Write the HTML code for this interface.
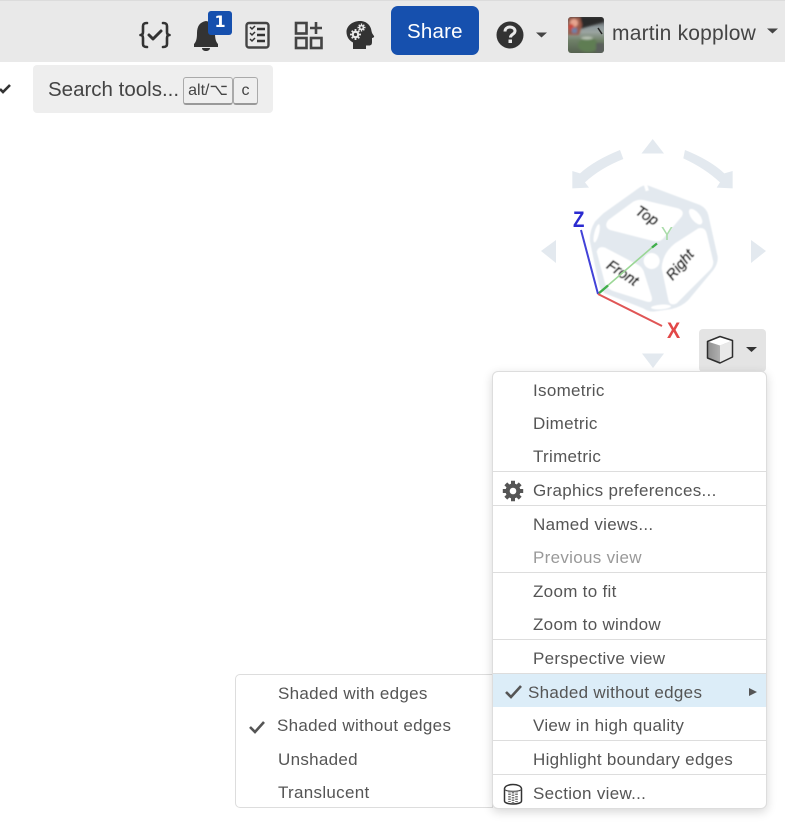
<!DOCTYPE html>
<html><head><meta charset="utf-8">
<style>
html,body{margin:0;padding:0;background:#fff}
body{width:785px;height:834px;position:relative;overflow:hidden;font-family:"Liberation Sans",sans-serif;color:#555}
.a{position:absolute}
.t{position:absolute;white-space:nowrap;font-size:17px;line-height:20px;color:#555;letter-spacing:.3px}
.h{position:absolute;height:1px;background:#ddd;left:493px;width:273px}
</style></head><body>
<!-- Top bar -->
<div class="a" style="left:0;top:0;width:785px;height:62px;background:#e9e9e9;border-top:1px solid #dcdcdc;box-sizing:border-box"></div>
<svg class="a" style="left:0;top:0" width="785" height="62" viewBox="0 0 785 62" fill="none">
<defs>
<linearGradient id="av" x1="0" y1="0" x2="0" y2="1"><stop offset="0" stop-color="#3c3c3e"/><stop offset=".28" stop-color="#8f999c"/><stop offset=".42" stop-color="#9aa39f"/><stop offset=".65" stop-color="#6f8068"/><stop offset="1" stop-color="#55614f"/></linearGradient>
<clipPath id="avc"><rect x="568" y="17" width="36" height="36" rx="3"/></clipPath>
<filter id="b1"><feGaussianBlur stdDeviation="1"/></filter>
</defs>
<!-- braces check -->
<g stroke="#333" stroke-width="2.600" stroke-linecap="round" stroke-linejoin="round">
<path d="M147 23c-3 0-4 1-4 3v6c0 2-1 3-2.500 3 1.500 0 2.500 1 2.500 3v6c0 2 1 3 4 3"/>
<path d="M163 23c3 0 4 1 4 3v6c0 2 1 3 2.500 3-1.500 0-2.500 1-2.500 3v6c0 2-1 3-4 3"/>
<path d="M149 35l4 4 8-8" stroke-width="3"/>
</g>
<!-- bell -->
<path d="M206 21c-6 1-9 5-9 12 0 6-1 9-3 11v3h24v-3c-2-2-3-5-3-11 0-7-3-11-9-12z" fill="#333"/>
<path d="M202 48h8c0 2-2 3-4 3s-4-1-4-3z" fill="#333"/>
<rect x="208" y="11" width="24" height="24" rx="3" fill="#1650ae"/>
<!-- checklist -->
<rect x="246.500" y="23" width="22" height="24.500" rx="2.500" stroke="#444" stroke-width="2.400"/>
<g stroke="#333" stroke-width="1.500"><path d="M250 27l2 2 3-3M250 33l2 2 3-3M250 39l2 2 3-3"/></g>
<g stroke="#333" stroke-width="2.400"><path d="M257 29h8M257 35h8M257 41h8"/></g>
<!-- apps plus -->
<g stroke="#444" stroke-width="2.600">
<rect x="296" y="23" width="10.500" height="10.500"/>
<rect x="296" y="38" width="10.500" height="10"/>
<rect x="311" y="38" width="10.500" height="10"/>
<path d="M316 22v12M310 28h12"/>
</g>
<!-- head gears -->
<path d="M360 21c7 0 11 5 11.500 10 .2 2 1.500 3.500 2.500 5 .5 1-.5 1.700-2 2v4c0 2.500-1 3.500-3 3.500h-3V49h-13v-6.500c-4-2-6.500-6-6.500-10.500 0-6 6-11 13.500-11z" fill="#333"/>
<g fill="#e9e9e9"><circle cx="355.500" cy="34.500" r="3.700"/><g stroke="#e9e9e9" stroke-width="1.800"><path d="M355.500 29v11M350 34.500h11M351.700 30.700l7.600 7.600M359.300 30.700l-7.600 7.600"/></g>
<circle cx="361.500" cy="27.500" r="2.600"/><g stroke="#e9e9e9" stroke-width="1.400"><path d="M361.500 23.500v8M357.500 27.500h8M358.700 24.700l5.600 5.600M364.300 24.700l-5.600 5.600"/></g></g>
<circle cx="355.500" cy="34.500" r="1.600" fill="#333"/><circle cx="361.500" cy="27.500" r="1.100" fill="#333"/>
<!-- share btn -->
<rect x="391" y="6" width="88" height="49" rx="7" fill="#1650ae"/>
<!-- help -->
<circle cx="510" cy="35" r="13.500" fill="#333"/>
<path d="M505 31.500c0-3 2.500-4.500 5-4.500s5 1.500 5 4c0 3.500-4.500 3-4.500 6.500" stroke="#e9e9e9" stroke-width="3" fill="none"/>
<rect x="508.500" y="39.500" width="3.500" height="3.500" fill="#e9e9e9"/>
<path d="M536 32.500h11l-5.500 5z" fill="#444"/>
<path d="M767 28.500h11l-5.500 5z" fill="#444"/>
<!-- avatar -->
<g clip-path="url(#avc)"><rect x="568" y="17" width="36" height="36" fill="url(#av)"/>
<g filter="url(#b1)">
<path d="M578 17h26v5l-14 4-10 3z" fill="#2a2a2c"/>
<path d="M568 17h12l2 8-3 10h-11z" fill="#9a5a48"/>
<circle cx="574" cy="23" r="4" fill="#e6a48f"/><circle cx="571" cy="27" r="3" fill="#c9473a"/>
<rect x="572" y="28" width="5" height="5" fill="#6d82a8"/>
<ellipse cx="588" cy="45" rx="10" ry="7" fill="#5f7d52"/>
<ellipse cx="587" cy="38" rx="6" ry="1.500" fill="#bcc5b8"/>
<path d="M596 43h8v10h-8z" fill="#5a5f5c"/>
</g>
<path d="M598 28l4 6" stroke="#222" stroke-width="1.500"/></g>
</svg>
<div class="t" style="left:407px;top:20px;font-size:20.500px;color:#fff;letter-spacing:.2px;line-height:24px">Share</div>
<div class="t" style="left:214.500px;top:11px;font-size:16px;font-weight:bold;color:#fff;line-height:22px;font-family:'DejaVu Sans',sans-serif;letter-spacing:0">1</div>
<div class="t" style="left:612px;top:22px;font-size:21px;line-height:24px;color:#444;letter-spacing:.2px">martin kopplow</div>

<!-- Search row -->
<svg class="a" style="left:0;top:82px" width="12" height="14" fill="none"><path d="M0 7l3 3 7-7" stroke="#333" stroke-width="2.600"/></svg>
<div class="a" style="left:33px;top:65px;width:240px;height:48px;background:#eee;border-radius:4px"></div>
<div class="t" style="left:48px;top:78px;font-size:20.500px;line-height:24px;color:#444;letter-spacing:0">Search tools...</div>
<div class="a" style="left:183px;top:77px;width:50px;height:28px;box-sizing:border-box;background:#efefef;border:1px solid #aaa;border-bottom:2px solid #999;border-radius:3px;font-size:16px;line-height:26px;text-align:center;color:#444;white-space:nowrap">alt/⌥</div>
<div class="a" style="left:233px;top:77px;width:25px;height:28px;box-sizing:border-box;background:#efefef;border:1px solid #aaa;border-bottom:2px solid #999;border-radius:3px;font-size:16px;line-height:26px;text-align:center;color:#444">c</div>

<!-- View cube -->
<svg class="a" style="left:530px;top:130px" width="250" height="250" viewBox="0 0 250 250" fill="none" font-family="'Liberation Sans',sans-serif">
<defs><filter id="b2" x="-10%" y="-10%" width="120%" height="120%"><feGaussianBlur stdDeviation="1.800"/></filter></defs>
<g fill="#e3e9ef">
<path d="M122.700 9l11.300 14.500h-22.500z"/>
<path d="M123 238l-11-14.500h22z"/>
<path d="M11 121l15-11v23z"/>
<path d="M236 121l-15-11v23z"/>
<path transform="translate(35 5) scale(.3333)" d="M165 45Q90 75 45 115L22 108V160L72 158L60 142Q105 100 175 72Z"/>
<path transform="translate(35 5) scale(.3333)" d="M360 45Q435 75 478 115L503 108V160L455 158L465 142Q420 100 355 70Z"/>
</g>
<g transform="translate(45 45) scale(.3333)" filter="url(#b2)">
<path fill="#e3e9ef" d="M215 30L375 90Q395 100 400 120L428 245Q430 265 415 285L340 375Q320 395 290 402L235 410Q220 410 205 400L90 355Q75 345 72 330L45 200Q42 170 60 140L85 115L190 40Q205 30 215 30Z"/>
<g fill="#fff">
<path d="M100 135L175 80Q190 72 205 75L310 100Q330 108 320 125L265 190Q255 202 235 198L105 165Q85 155 100 135Z"/>
<path d="M260 280Q262 235 300 205L370 160Q390 155 395 175L415 260Q415 275 405 285L305 385Q285 395 280 375Z"/>
<path d="M65 230Q70 212 90 218L190 270Q205 280 208 295L230 365Q235 385 215 380L120 350Q100 345 90 325Z"/>
<circle cx="230" cy="258" r="24"/>
<ellipse cx="362" cy="125" rx="13" ry="28" transform="rotate(-38 362 125)"/>
<ellipse cx="65" cy="175" rx="7" ry="28" transform="rotate(14 65 175)"/>
<ellipse cx="258" cy="396" rx="30" ry="7" transform="rotate(-4 258 396)"/>
<rect x="208" y="20" width="10" height="28" transform="rotate(-16 213 34)"/>
</g>
<g fill="#222" stroke="#222" stroke-width="1.500" font-style="italic" font-size="44">
<text transform="translate(178 115) rotate(32)">Top</text>
<text transform="translate(92 278) rotate(33)">Front</text>
<text transform="translate(293 318) rotate(-50)">Right</text>
</g>
</g>
<path d="M68 164l58-50" stroke="#9bd796" stroke-width="1.600"/>
<path d="M68 164l10-8.500" stroke="#3fae4a" stroke-width="2.400"/>
<path d="M122 117.500l5-4" stroke="#3fae4a" stroke-width="2.400"/>
<path d="M51 100l17 64" stroke="#4242d8" stroke-width="2"/>
<path d="M68 164l64 32" stroke="#e05555" stroke-width="2"/>
<text transform="translate(43 97) scale(.85 1)" font-size="22" font-weight="bold" fill="#2a2ad0">Z</text>
<text transform="translate(137 208) scale(.9 1)" font-size="22" font-weight="bold" fill="#e24848">X</text>
<text x="131" y="110" font-size="18" fill="#a9dca9">Y</text>
</svg>

<!-- cube button -->
<div class="a" style="left:699px;top:329px;width:67px;height:43px;background:#e4e4e4;border-radius:4px"></div>
<svg class="a" style="left:699px;top:329px" width="67" height="43" fill="none">
<defs><linearGradient id="cl" x1="0" x2="1"><stop offset="0" stop-color="#8f8f8f"/><stop offset="1" stop-color="#d0d0d0"/></linearGradient></defs>
<path d="M8.500 12.500L21 7.500l12.500 4v16.500L21 34 8.500 29z" fill="url(#cl)"/>
<path d="M8.500 12.500L21 7.500l12.500 4L21 16.500z" fill="#fff"/>
<path d="M21 16.500l12.500-5v16.500L21 34z" fill="#e8e8e8"/>
<path d="M8.500 12.500L21 7.500l12.500 4v16.500L21 34 8.500 29z" stroke="#2e2e2e" stroke-width="1.500" stroke-linejoin="round"/>
<path d="M47 18h11l-5.500 5z" fill="#333"/>
</svg>

<!-- Submenu -->
<div class="a" style="left:235px;top:674px;width:258px;height:134px;box-sizing:border-box;background:#fff;border:1px solid #ddd;border-radius:5px 0 0 5px"></div>
<div class="t" style="left:278px;top:684px">Shaded with edges</div>
<div class="t" style="left:277px;top:716px">Shaded without edges</div>
<div class="t" style="left:278px;top:750px">Unshaded</div>
<div class="t" style="left:278px;top:783px">Translucent</div>
<svg class="a" style="left:248px;top:719px" width="18" height="16" fill="none"><path d="M2 8l5 5L16 3" stroke="#555" stroke-width="2.600"/></svg>

<!-- Main menu -->
<div class="a" style="left:492px;top:371px;width:275px;height:438px;box-sizing:border-box;background:#fff;border:1px solid #ddd;border-radius:6px;box-shadow:0 3px 10px rgba(0,0,0,.16)"></div>
<div class="t" style="left:533px;top:381px">Isometric</div>
<div class="t" style="left:533px;top:414px">Dimetric</div>
<div class="t" style="left:533px;top:447px">Trimetric</div>
<div class="h" style="top:471px"></div>
<div class="t" style="left:533px;top:481px">Graphics preferences...</div>
<div class="h" style="top:505px"></div>
<div class="t" style="left:533px;top:515px">Named views...</div>
<div class="t" style="left:533px;top:548px;color:#999">Previous view</div>
<div class="h" style="top:572px"></div>
<div class="t" style="left:533px;top:582px">Zoom to fit</div>
<div class="t" style="left:533px;top:615px">Zoom to window</div>
<div class="h" style="top:639px"></div>
<div class="t" style="left:533px;top:649px">Perspective view</div>
<div class="a" style="left:493px;top:673px;width:273px;height:34px;background:#dcedf8;border-top:1px solid #ddd;box-sizing:border-box"></div>
<div class="t" style="left:528px;top:683px">Shaded without edges</div>
<div class="t" style="left:533px;top:716px">View in high quality</div>
<div class="h" style="top:740px"></div>
<div class="t" style="left:533px;top:750px">Highlight boundary edges</div>
<div class="h" style="top:774px"></div>
<div class="t" style="left:533px;top:784px">Section view...</div>
<svg class="a" style="left:500px;top:680px" width="258" height="24" fill="none">
<path d="M6 12l5 5L21 6" stroke="#555" stroke-width="2.600"/>
<path d="M249 8l8 4-8 4z" fill="#555"/>
</svg>
<!-- gear -->
<svg class="a" style="left:502px;top:480px" width="22" height="22" viewBox="0 0 22 22">
<g fill="#555"><circle cx="11" cy="11" r="7.500"/>
<g stroke="#555" stroke-width="4"><path d="M11 .8v20.400M.8 11h20.400M3.800 3.800l14.400 14.400M18.200 3.800L3.800 18.200"/></g></g>
<circle cx="11" cy="11" r="3.300" fill="#fff"/>
</svg>
<!-- section view icon -->
<svg class="a" style="left:503px;top:783px" width="20" height="22" viewBox="0 0 20 22" fill="none">
<path d="M1.500 6c0-6 17-6 17 0v12c0 4-17 4-17 0z" stroke="#333" stroke-width="1.500"/>
<path d="M1.500 6c0 3 17 3 17 0" stroke="#444" stroke-width="1"/>
<path d="M6.500 8v11M10 9v11M13.500 8v11" stroke="#777" stroke-width="2.600" stroke-dasharray="1.500 1"/>
</svg>
</body></html>
